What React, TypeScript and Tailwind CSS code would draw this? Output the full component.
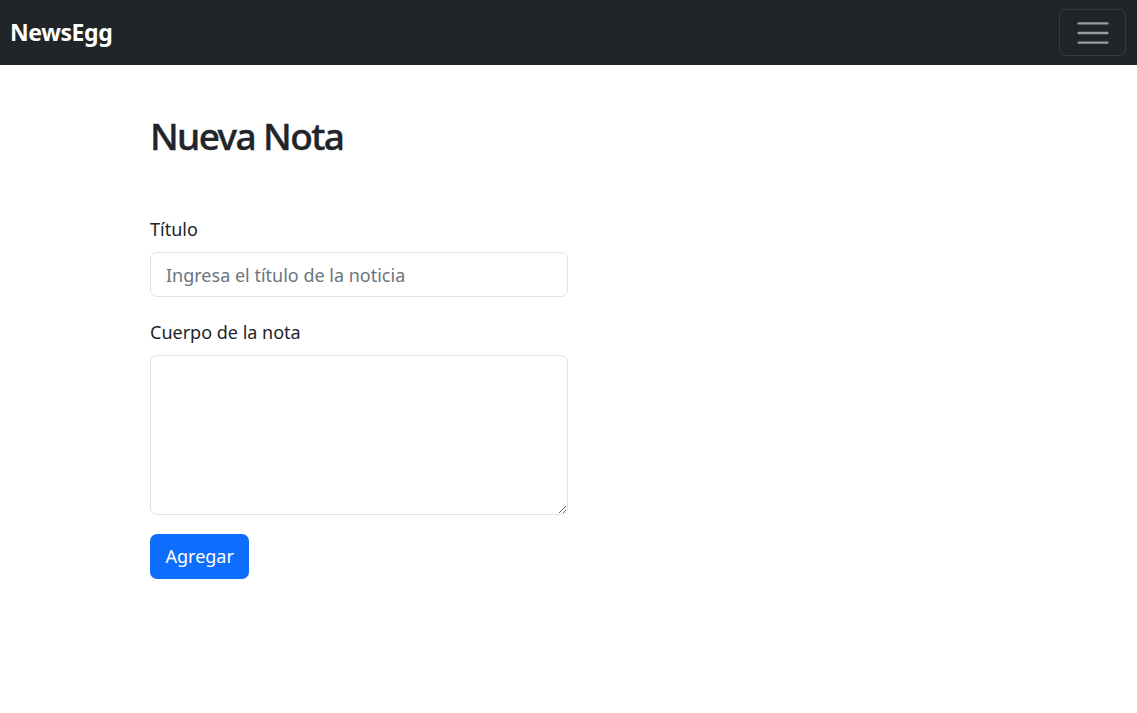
import React from 'react';

const font = { fontFamily: '"Noto Sans", "Open Sans", sans-serif' };

const Navbar: React.FC = () => (
    <nav className="h-[65px] bg-[#212529] flex items-center justify-between pl-[10px] pr-[11px]">
        <a href="#" className="text-white font-bold text-[23px] leading-none tracking-[-0.4px]">
            NewsEgg
        </a>
        <button
            type="button"
            aria-label="Toggle navigation"
            className="w-[67px] h-[47px] flex items-center justify-center border border-white/10 rounded-[7px]"
        >
            <svg width="36" height="36" viewBox="0 0 30 30" fill="none">
                <path
                    d="M3 7h24M3 15h24M3 23h24"
                    stroke="rgba(255,255,255,0.55)"
                    strokeWidth="2"
                    strokeLinecap="round"
                />
            </svg>
        </button>
    </nav>
);

export default function App() {
    return (
        <div className="min-h-screen bg-white text-[#212529]" style={font}>
            <Navbar />

            <main className="pl-[150px] pt-[45px]">
                <h1 className="text-[37px] leading-[52px] font-medium tracking-[-1.6px] [-webkit-text-stroke:0.4px_#212529] mb-[51px]">
                    Nueva Nota
                </h1>

                <form className="w-[418px]" onSubmit={e => e.preventDefault()}>
                    <div className="mb-[19px]">
                        <label className="block text-[18px] leading-[29px] pt-[2px] mb-[8px]">
                            Título
                        </label>
                        <input
                            type="text"
                            placeholder="Ingresa el título de la noticia"
                            className="
                                block
                                w-full
                                h-[45px]
                                px-[15px]
                                text-[18px]
                                border
                                border-[#dee2e6]
                                rounded-[7px]
                                placeholder:text-[#6c757d]
                                outline-none
                            "
                        />
                    </div>

                    <div className="mb-[19px]">
                        <label className="block text-[18px] leading-[29px] pt-[2px] mb-[8px]">
                            Cuerpo de la nota
                        </label>
                        <textarea
                            className="
                                block
                                w-full
                                h-[160px]
                                px-[15px]
                                py-[8px]
                                text-[18px]
                                border
                                border-[#dee2e6]
                                rounded-[7px]
                                outline-none
                                resize-y
                            "
                        />
                    </div>

                    <button
                        type="submit"
                        className="
                            h-[45px]
                            px-[15.5px]
                            bg-[#0d6efd]
                            text-white
                            text-[18px]
                            rounded-[7px]
                        "
                    >
                        Agregar
                    </button>
                </form>
            </main>
        </div>
    );
}
